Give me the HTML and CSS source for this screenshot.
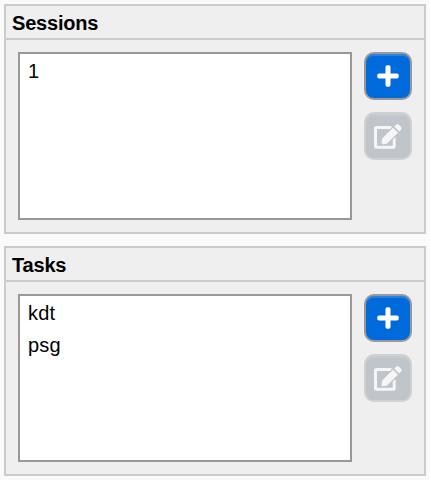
FILE: index.html
```html
<!DOCTYPE html>
<html lang="en">
<head>
<meta charset="utf-8">
<title>Sessions and Tasks</title>
<link rel="stylesheet" href="styles.css">
</head>
<body>
<svg class="defs" aria-hidden="true">
  <symbol id="plus" viewBox="0 0 22 22"><rect x="0.300" y="8.500" width="21.400" height="5" rx="1.700"/><rect x="8.500" y="0.300" width="5" height="21.400" rx="1.700"/></symbol>
  <symbol id="edit" viewBox="0 0 32 32">
    <path d="M18.500 7.500H4.500Q3.500 7.500 3.500 8.500V26.200Q3.500 27.200 4.500 27.200H21.200Q22.200 27.200 22.200 26.200V18.500" fill="none" stroke="currentColor" stroke-width="3" stroke-linecap="round"/>
    <path class="gap" d="M10 23.800L10.400 18.800L21 8.200L25.500 12.700L14.900 23.300Z"/>
    <path d="M10 23.800L10.400 18.800L21 8.200L25.500 12.700L14.900 23.300Z" stroke="currentColor" stroke-width="1" stroke-linejoin="round"/>
    <path d="M22.600 6.600L24.200 5Q25.500 3.700 26.800 5L28.900 7.100Q30.100 8.400 28.800 9.600L27.200 11.200Z" stroke="currentColor" stroke-width=".6" stroke-linejoin="round"/>
  </symbol>
</svg>
<section class="panel">
  <h2 class="title">Sessions</h2>
  <div class="content">
    <ul class="list"><li>1</li></ul>
    <div class="actions">
      <button class="btn" aria-label="Add session"><svg class="icon-plus"><use href="#plus"/></svg></button>
      <button class="btn" aria-label="Edit session" disabled><svg class="icon-edit"><use href="#edit"/></svg></button>
    </div>
  </div>
</section>
<section class="panel">
  <h2 class="title">Tasks</h2>
  <div class="content">
    <ul class="list"><li>kdt</li><li>psg</li></ul>
    <div class="actions">
      <button class="btn" aria-label="Add task"><svg class="icon-plus"><use href="#plus"/></svg></button>
      <button class="btn" aria-label="Edit task" disabled><svg class="icon-edit"><use href="#edit"/></svg></button>
    </div>
  </div>
</section>
</body>
</html>
```
FILE: styles.css
```css
* { box-sizing: border-box; }
body {
  margin: 0;
  padding: 4px;
  display: flex;
  flex-direction: column;
  gap: 12px;
  background: #fafafa;
  color: #000;
  font: 20px/32px "Liberation Sans", Arial, sans-serif;
}
.defs { display: none; }
.panel {
  width: 422px;
  height: 230px;
  border: 2px solid #cbcbcb;
  background: #efefef;
}
.title {
  height: 34px;
  margin: 0;
  padding-left: 6px;
  border-bottom: 2px solid #cbcbcb;
  font-size: 20px;
  line-height: 34px;
  letter-spacing: -0.2px;
}
.content {
  display: flex;
  gap: 12px;
  padding: 12px;
}
.list {
  width: 334px;
  height: 168px;
  margin: 0;
  padding: 1px 8px;
  border: 2px solid #999;
  background: #fff;
  list-style: none;
  letter-spacing: 0.2px;
}
.actions {
  display: flex;
  flex-direction: column;
  gap: 12px;
}
.btn {
  display: flex;
  align-items: center;
  justify-content: center;
  width: 48px;
  height: 48px;
  padding: 0;
  border: 2px solid #999;
  border-radius: 10px;
  background: #006adb;
  box-shadow: inset 0 2px 0 #2681e0;
  color: #fff;
}
.btn:disabled {
  border-color: #cfd0d1;
  background: #c0c5c9;
  box-shadow: inset 0 2px 0 #c8cccf;
  color: #f5f6f6;
}
.btn svg { fill: currentColor; }
.icon-plus { width: 22px; height: 22px; }
.icon-edit { width: 32px; height: 32px; }
.gap { stroke: #c0c5c9; stroke-width: 3px; }
```
